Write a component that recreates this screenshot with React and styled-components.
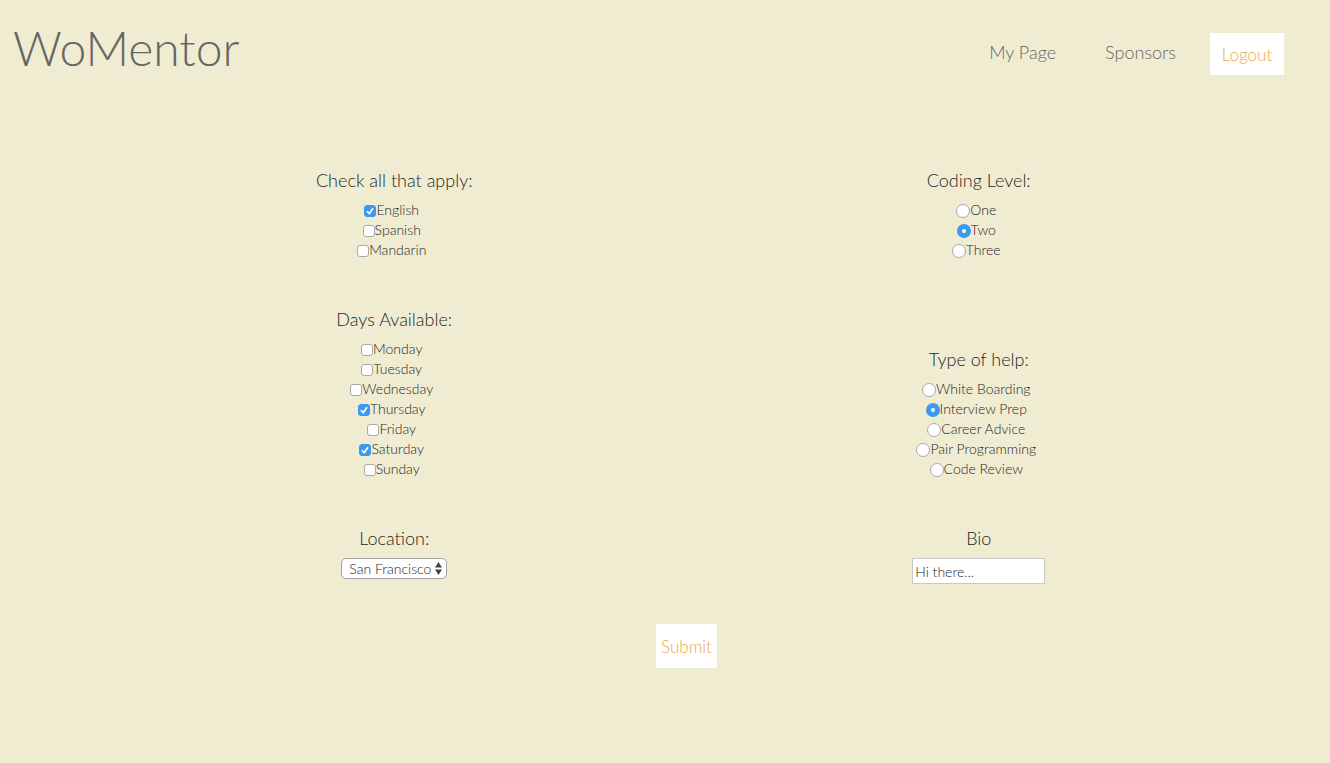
import React from "react";
import styled, { createGlobalStyle } from "styled-components";

const GlobalStyle = createGlobalStyle`
  * { box-sizing: border-box; }
  body {
    margin: 0;
    background: #f0ecd2;
    color: #262626;
    font-family: Lato, "Open Sans", sans-serif;
    font-weight: 300;
  }
`;

const Header = styled.header`
  display: flex;
  align-items: flex-start;
  justify-content: space-between;
  height: 120px;
  padding: 0 46px 0 13px;
  color: #666;
`;

const Logo = styled.h1`
  margin: 14px 0 0;
  font-size: 48px;
  line-height: 68px;
  font-weight: 300;
`;

const Nav = styled.nav`
  display: flex;
  align-items: flex-start;
  padding-top: 33px;
`;

const NavLink = styled.a`
  margin-right: ${(p) => p.$gap}px;
  color: inherit;
  font-size: 18px;
  line-height: 38px;
  text-decoration: none;
`;

const ActionButton = styled.button`
  width: ${(p) => p.$width}px;
  height: ${(p) => p.$height}px;
  padding: 0;
  border: 0;
  background: #fff;
  color: #e9a94f;
  font: inherit;
  font-size: 17px;
`;

const Form = styled.form`
  padding: 47px 59px 40px 102px;
`;

const Fields = styled.div`
  display: grid;
  grid-template-columns: 1fr 1fr;
  align-items: start;
  row-gap: 46px;
`;

const Group = styled.fieldset`
  display: flex;
  flex-direction: column;
  align-items: center;
  align-self: ${(p) => (p.$bottom ? "end" : "start")};
  min-width: 0;
  margin: 0;
  padding: 0;
  border: 0;
`;

const Title = styled.legend`
  width: 100%;
  padding: 0 0 7px;
  font-size: 18px;
  line-height: 26px;
  text-align: center;
`;

const FieldBlock = styled.div`
  display: flex;
  flex-direction: column;
  align-items: center;
`;

const FieldLabel = styled.label`
  padding-bottom: 7px;
  font-size: 18px;
  line-height: 26px;
`;

const Option = styled.label`
  display: flex;
  align-items: center;
  height: 20px;
  padding-right: 5px;
  font-size: 14px;
  line-height: 20px;
`;

const CheckMark = encodeURIComponent(
  '<svg xmlns="http://www.w3.org/2000/svg" viewBox="0 0 12 12"><path d="M3 6.3 5.2 8.7 9 3.2" fill="none" stroke="#fff" stroke-width="1.7"/></svg>'
);

const Checkbox = styled.input`
  appearance: none;
  flex: none;
  width: 12px;
  height: 12px;
  margin: 2px 0 0;
  border: 1px solid #a9a9a9;
  border-radius: 3px;
  background: #fff;
  &:checked {
    border-color: #3b99f0;
    background: #3b99f0 url("data:image/svg+xml,${CheckMark}") center / 12px 12px;
    background-origin: border-box;
  }
`;

const Radio = styled.input`
  appearance: none;
  flex: none;
  width: 14px;
  height: 14px;
  margin: 2px 0 0;
  border: 1px solid #a9a9a9;
  border-radius: 50%;
  background: #fff;
  &:checked {
    border: 5px solid #3b99f0;
  }
`;

const SelectWrap = styled.div`
  position: relative;
  display: flex;
`;

const Select = styled.select`
  appearance: none;
  width: 106px;
  height: 21px;
  padding: 0 12px 1px 7px;
  border: 1px solid #a3a3a3;
  border-radius: 5px;
  background: #fff;
  color: inherit;
  font: inherit;
  font-size: 14px;
`;

const Arrows = styled.svg`
  position: absolute;
  top: 4px;
  right: 5px;
  pointer-events: none;
`;

const BioInput = styled.input`
  width: 133px;
  height: 26px;
  padding: 0 2px;
  border: 1px solid #c8c8c8;
  background: #fff;
  color: inherit;
  font: inherit;
  font-size: 14px;
`;

const Actions = styled.div`
  display: flex;
  justify-content: center;
  margin-top: 40px;
`;

function CheckGroup({ title, options, checked }) {
  return (
    <Group>
      <Title>{title}</Title>
      {options.map((name) => (
        <Option key={name}>
          <Checkbox type="checkbox" defaultChecked={checked.includes(name)} />
          {name}
        </Option>
      ))}
    </Group>
  );
}

function RadioGroup({ title, name, options, selected, bottom }) {
  return (
    <Group $bottom={bottom}>
      <Title>{title}</Title>
      {options.map((option) => (
        <Option key={option}>
          <Radio type="radio" name={name} defaultChecked={option === selected} />
          {option}
        </Option>
      ))}
    </Group>
  );
}

export default function App() {
  return (
    <>
      <GlobalStyle />
      <Header>
        <Logo>WoMentor</Logo>
        <Nav>
          <NavLink href="#me" $gap={49}>My Page</NavLink>
          <NavLink href="#sponsors" $gap={34}>Sponsors</NavLink>
          <ActionButton type="button" $width={74} $height={42}>Logout</ActionButton>
        </Nav>
      </Header>
      <Form onSubmit={(e) => e.preventDefault()}>
        <Fields>
          <CheckGroup
            title="Check all that apply:"
            options={["English", "Spanish", "Mandarin"]}
            checked={["English"]}
          />
          <RadioGroup
            title="Coding Level:"
            name="level"
            options={["One", "Two", "Three"]}
            selected="Two"
          />
          <CheckGroup
            title="Days Available:"
            options={["Monday", "Tuesday", "Wednesday", "Thursday", "Friday", "Saturday", "Sunday"]}
            checked={["Thursday", "Saturday"]}
          />
          <RadioGroup
            title="Type of help:"
            name="help"
            options={["White Boarding", "Interview Prep", "Career Advice", "Pair Programming", "Code Review"]}
            selected="Interview Prep"
            bottom
          />
          <FieldBlock>
            <FieldLabel htmlFor="location">Location:</FieldLabel>
            <SelectWrap>
              <Select id="location" defaultValue="San Francisco">
                <option>San Francisco</option>
              </Select>
              <Arrows width="7" height="13" viewBox="0 0 7 13" aria-hidden="true">
                <path d="M3.5 0 7 5.5H0zM3.5 13 0 7.5h7z" fill="#444" />
              </Arrows>
            </SelectWrap>
          </FieldBlock>
          <FieldBlock>
            <FieldLabel htmlFor="bio">Bio</FieldLabel>
            <BioInput id="bio" type="text" defaultValue="Hi there..." />
          </FieldBlock>
        </Fields>
        <Actions>
          <ActionButton type="submit" $width={61} $height={44}>Submit</ActionButton>
        </Actions>
      </Form>
    </>
  );
}
